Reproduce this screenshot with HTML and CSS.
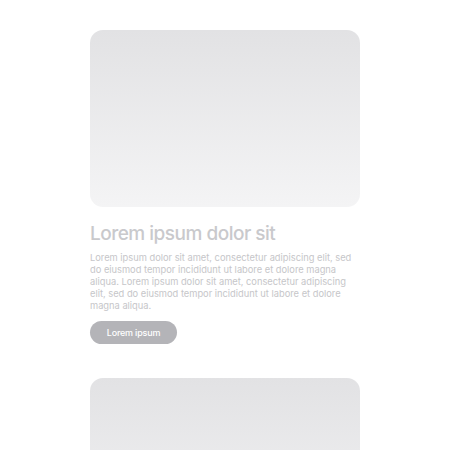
FILE: index.html
```html
<!DOCTYPE html>
<html>
<head>
<meta charset="utf-8">
<link rel="stylesheet" href="styles.css">
</head>
<body>
<div class="list">
  <div class="card">
    <div class="image"></div>
    <h2 class="title">Lorem ipsum dolor sit</h2>
    <p class="text">Lorem ipsum dolor sit amet, consectetur adipiscing elit, sed do eiusmod tempor incididunt ut labore et dolore magna aliqua. Lorem ipsum dolor sit amet, consectetur adipiscing elit, sed do eiusmod tempor incididunt ut labore et dolore magna aliqua.</p>
    <button class="btn">Lorem ipsum</button>
  </div>
  <div class="card">
    <div class="image"></div>
  </div>
</div>
</body>
</html>
```
FILE: styles.css
```css
html, body {
  margin: 0;
  padding: 0;
  background: #ffffff;
  overflow: hidden;
}
.list {
  display: flex;
  flex-direction: column;
  gap: 34px;
  padding: 30px 90px 0;
}
.card {
  display: flex;
  flex-direction: column;
  align-items: flex-start;
}
.image {
  width: 270px;
  height: 177px;
  border-radius: 13px;
  background: linear-gradient(180deg, #e2e2e4 0%, #f4f4f5 100%);
}
.title {
  margin: 15px 0 0;
  font-family: "Inter", sans-serif;
  font-weight: 500;
  font-size: 19px;
  line-height: 24px;
  letter-spacing: -0.5px;
  color: #c9c9cc;
}
.text {
  margin: 6px 0 0;
  width: 262px;
  font-family: "Inter", sans-serif;
  font-size: 9.3px;
  line-height: 12px;
  letter-spacing: 0;
  color: #c6c6c9;
}
.btn {
  margin-top: 9px;
  width: 87px;
  height: 23px;
  border: none;
  border-radius: 12px;
  background: #b4b4b8;
  color: #ffffff;
  font-family: "Inter", sans-serif;
  font-size: 9px;
  font-weight: 500;
  letter-spacing: -0.2px;
  padding: 0;
}
```
